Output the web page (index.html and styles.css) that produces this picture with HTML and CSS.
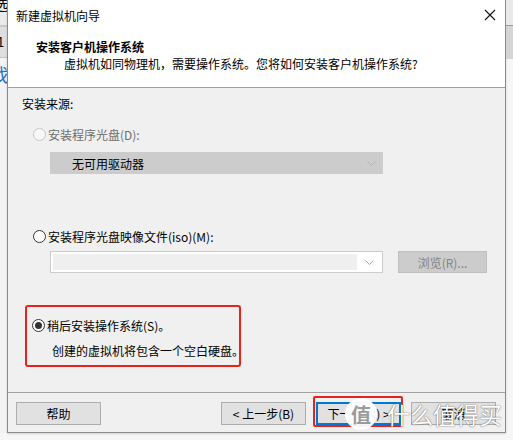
FILE: index.html
```html
<!DOCTYPE html>
<html lang="zh-CN">
  <head>
    <meta charset="UTF-8" />
    <meta name="viewport" content="width=device-width, initial-scale=1.0" />
    <title>新建虚拟机向导</title>
    <link rel="stylesheet" href="styles.css">
  </head>
  <body>
    <div class="desktop">
      <!-- bits of the app behind the dialog -->
      <div class="side side-left">
        <div class="bg-top"><span>选</span></div>
        <div class="bg-mid"><span>1</span></div>
        <div class="bg-low"><span>找</span></div>
      </div>

      <div class="wizard">
        <div class="titlebar">
          <span class="title">新建虚拟机向导</span>
          <svg class="close" width="12" height="12" viewBox="0 0 12 12">
            <path d="M1 1 L11 11 M11 1 L1 11" stroke="#111" stroke-width="1.1" fill="none" />
          </svg>
        </div>

        <div class="header">
          <h1>安装客户机操作系统</h1>
          <p>虚拟机如同物理机，需要操作系统。您将如何安装客户机操作系统?</p>
        </div>

        <div class="content">
          <div class="label">安装来源:</div>

          <label class="radio disabled"><span class="dot"></span>安装程序光盘(D):</label>
          <div class="combo combo-disabled">
            <span class="combo-text">无可用驱动器</span>
            <svg class="arrow" width="9" height="5" viewBox="0 0 9 5">
              <path d="M0.5 0.5 L4.5 4.5 L8.5 0.5" stroke="#b4b4b4" fill="none" />
            </svg>
          </div>

          <label class="radio radio-iso"><span class="dot"></span>安装程序光盘映像文件(iso)(M):</label>
          <div class="iso-row">
            <div class="combo combo-iso">
              <span class="field"></span>
              <svg class="arrow" width="9" height="5" viewBox="0 0 9 5">
                <path d="M0.5 0.5 L4.5 4.5 L8.5 0.5" stroke="#a8a8a8" fill="none" />
              </svg>
            </div>
            <button class="btn browse">浏览(R)...</button>
          </div>

          <div class="highlight">
            <label class="radio checked"><span class="dot"></span>稍后安装操作系统(S)。</label>
            <div class="note">创建的虚拟机将包含一个空白硬盘。</div>
          </div>
        </div>

        <div class="footer">
          <button class="btn">帮助</button>
          <span class="spacer"></span>
          <button class="btn">&lt; 上一步(B)</button>
          <div class="next-wrap">
            <button class="btn primary">下一步(N) &gt;</button>
            <span class="mark"></span>
          </div>
          <button class="btn">取消</button>

          <!-- site watermark over the corner -->
          <div class="watermark">
            <span class="logo">值</span>
            <span class="wm-text">什么值得买</span>
          </div>
        </div>
      </div>

      <div class="side side-right">
        <div class="r-top"></div>
        <div class="r-mid"></div>
      </div>
    </div>
  </body>
</html>
```

FILE: styles.css
```css
* {
  margin: 0;
  padding: 0;
  box-sizing: border-box;
}
body {
  width: 513px;
  height: 440px;
  overflow: hidden;
  background-color: #f6f6f6;
  color: #000;
  font-family: "Noto Sans CJK SC", "Noto Sans", sans-serif;
  font-size: 12px;
}
.desktop {
  display: flex;
  height: 433px;
}

/* background app strips */
.side {
  display: flex;
  flex-direction: column;
  overflow: hidden;
}
.side-left {
  width: 7px;
}
.bg-top {
  height: 27px;
  background-color: #eaeaea;
  border-bottom: 2px solid #c8c8c8;
  line-height: 16px;
  font-size: 14px;
}
.bg-top span {
  margin-left: -6px;
  margin-top: -4px;
  display: block;
}
.bg-mid {
  height: 31px;
  background-color: #dedede;
  border-bottom: 1px solid #c4c4c4;
  line-height: 30px;
  font-size: 13px;
}
.bg-mid span {
  margin-left: -3px;
}
.bg-low {
  flex: 1;
  background-color: #f3f3f3;
  font-size: 18px;
  color: #2a6fc9;
}
.bg-low span {
  display: block;
  margin-left: -9px;
  margin-top: 3px;
}
.side-right {
  width: 7px;
}
.r-top {
  height: 26px;
  background-color: #e9e9e9;
  border-bottom: 1px solid #9a9a9a;
}
.r-mid {
  height: 33px;
  background-color: #d4d4d4;
}

/* dialog */
.wizard {
  width: 499px;
  display: flex;
  flex-direction: column;
  border: 1px solid #8a8a8a;
  border-top: none;
  background-color: #f0f0f0;
  box-shadow: 0 1px 2px rgba(0, 0, 0, 0.15);
}
.titlebar {
  height: 30px;
  background-color: #fff;
  display: flex;
  align-items: center;
  justify-content: space-between;
  padding: 0 9px 0 8px;
}
.title {
  font-size: 12px;
}
.close {
  display: block;
}
.header {
  height: 58px;
  background-color: #fff;
  border-bottom: 1px solid #a0a0a0;
  padding-top: 8px;
}
.header h1 {
  font-size: 12px;
  font-weight: bold;
  line-height: 17px;
  padding-left: 28px;
}
.header p {
  line-height: 17px;
  padding-left: 56px;
}

.content {
  height: 305px;
  border-bottom: 1px solid #a0a0a0;
  padding: 7px 0 0 14px;
  display: flex;
  flex-direction: column;
  align-items: flex-start;
}
.label {
  line-height: 17px;
}
.radio {
  display: flex;
  align-items: center;
  line-height: 17px;
  white-space: nowrap;
  margin: 14px 0 0 11px;
}
.dot {
  width: 13px;
  height: 13px;
  border: 1px solid #333;
  border-radius: 50%;
  background-color: #fff;
  margin-right: 2px;
  display: flex;
  align-items: center;
  justify-content: center;
}
.radio.disabled {
  color: #6d6d6d;
}
.radio.disabled .dot {
  border-color: #c6c6c6;
  background-color: #f7f7f7;
}
.radio.checked .dot::after {
  content: "";
  width: 7px;
  height: 7px;
  border-radius: 50%;
  background-color: #333;
}
.radio-iso {
  margin-top: 54px;
}

.combo {
  width: 333px;
  height: 22px;
  margin-left: 28px;
  display: flex;
  align-items: center;
  border: 1px solid #cccccc;
}
.combo-disabled {
  margin-top: 9px;
  background-color: #cccccc;
  padding-left: 21px;
}
.combo-text {
  flex: 1;
}
.arrow {
  margin-right: 6px;
}
.iso-row {
  display: flex;
  gap: 15px;
  margin-top: 6px;
}
.combo-iso {
  background-color: #fff;
  padding: 2px;
}
.field {
  align-self: stretch;
  width: 309px;
  background-color: #efefef;
  margin-right: 8px;
}

.btn {
  width: 85px;
  height: 23px;
  font-family: inherit;
  font-size: 12px;
  color: #000;
  background-color: #e1e1e1;
  border: 1px solid #adadad;
}
.browse {
  width: 89px;
  height: 22px;
  background-color: #cccccc;
  border-color: #bfbfbf;
  color: #838383;
}

.highlight {
  margin: 32px 0 0 3px;
  width: 216px;
  height: 62px;
  border: 2.5px solid #e8231b;
  border-radius: 3px;
  padding: 10px 0 0 5px;
}
.highlight .radio {
  margin: 0;
}
.note {
  line-height: 17px;
  white-space: nowrap;
  margin: 8px 0 0 20px;
}

.footer {
  position: relative;
  flex: 1;
  display: flex;
  align-items: flex-start;
  gap: 10px;
  padding: 9px 9px 0 8px;
}
.spacer {
  flex: 1;
}
.next-wrap {
  position: relative;
}
.primary {
  border: 2px solid #0078d7;
}
.mark {
  position: absolute;
  left: -3px;
  top: -6px;
  width: 90px;
  height: 31px;
  border: 2.5px solid #e8231b;
  border-radius: 2px;
}
.watermark {
  position: absolute;
  left: 337px;
  top: 5px;
  display: flex;
  align-items: center;
  gap: 10px;
}
.logo {
  width: 32px;
  height: 32px;
  border-radius: 50%;
  background-color: rgba(255, 255, 255, 0.95);
  color: #9a9a9a;
  font-size: 20px;
  font-weight: bold;
  display: flex;
  align-items: center;
  justify-content: center;
}
.wm-text {
  font-size: 23px;
  line-height: 26px;
  color: #fff;
  text-shadow: 0 0 1px rgba(0, 0, 0, 0.6), 0 0 2px rgba(0, 0, 0, 0.3);
}
```
